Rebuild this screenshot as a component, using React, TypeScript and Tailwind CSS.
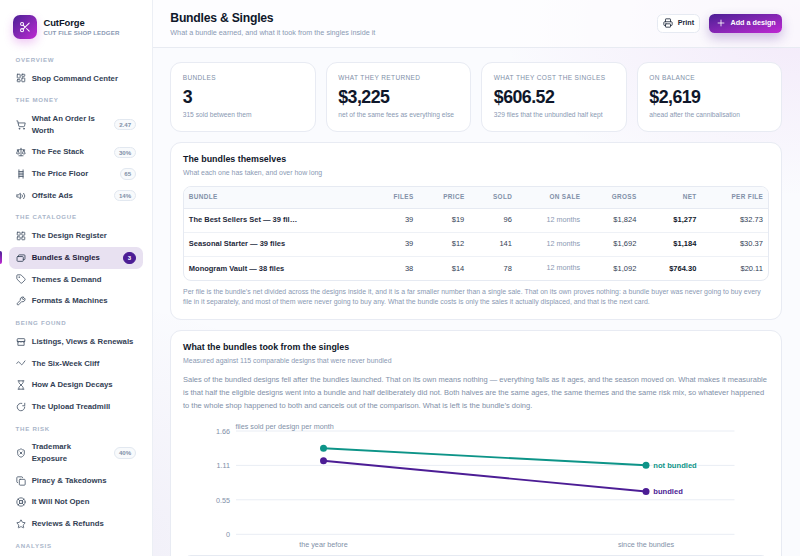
import type { ReactNode } from "react";
import {
  Copy,
  Hourglass,
  LayoutDashboard,
  LayoutGrid,
  LifeBuoy,
  Plus,
  Printer,
  Scale,
  Scissors,
  ShieldX,
  ShoppingCart,
  Star,
  Tag,
} from "lucide-react";

const iconClass = "w-[10px] h-[10px] shrink-0";

function Glyph({ children }: { children: ReactNode }) {
  return (
    <svg
      viewBox="0 0 24 24"
      fill="none"
      stroke="currentColor"
      strokeWidth={2}
      strokeLinecap="round"
      strokeLinejoin="round"
      className={iconClass}
    >
      {children}
    </svg>
  );
}

type Item = { label: string; icon: ReactNode; badge?: string; active?: boolean };

const groups: { title: string; items: Item[] }[] = [
  {
    title: "OVERVIEW",
    items: [{ label: "Shop Command Center", icon: <LayoutDashboard className={iconClass} /> }],
  },
  {
    title: "THE MONEY",
    items: [
      { label: "What An Order Is Worth", icon: <ShoppingCart className={iconClass} />, badge: "2.47" },
      { label: "The Fee Stack", icon: <Scale className={iconClass} />, badge: "30%" },
      {
        label: "The Price Floor",
        icon: (
          <Glyph>
            <path d="M7 2v20M17 2v20M7 6h10M7 10h10M7 14h10M7 18h10" />
          </Glyph>
        ),
        badge: "65",
      },
      {
        label: "Offsite Ads",
        icon: (
          <Glyph>
            <path d="M2 9.500v5h3.500l5 4v-13l-5 4zM14.500 9a4 4 0 0 1 0 6M18.500 5.500a9.500 9.500 0 0 1 0 13" />
          </Glyph>
        ),
        badge: "14%",
      },
    ],
  },
  {
    title: "THE CATALOGUE",
    items: [
      { label: "The Design Register", icon: <LayoutGrid className={iconClass} /> },
      {
        label: "Bundles & Singles",
        icon: (
          <Glyph>
            <rect x="2.500" y="8.500" width="15" height="11.500" rx="2" />
            <path d="M6 8.500V6.500a2 2 0 0 1 2-2h11.500a2 2 0 0 1 2 2V14a2 2 0 0 1-2 2h-2" />
          </Glyph>
        ),
        badge: "3",
        active: true,
      },
      { label: "Themes & Demand", icon: <Tag className={iconClass} /> },
      {
        label: "Formats & Machines",
        icon: (
          <Glyph>
            <path d="M18.500 2.800a6 6 0 0 0-8 7.700L3 17.500A2.500 2.500 0 0 0 6.500 21l7-7.500a6 6 0 0 0 7.700-8L17.500 9 15 6.500z" />
          </Glyph>
        ),
      },
    ],
  },
  {
    title: "BEING FOUND",
    items: [
      {
        label: "Listings, Views & Renewals",
        icon: (
          <Glyph>
            <path d="M3 10V5.500A1.500 1.500 0 0 1 4.500 4h15A1.500 1.500 0 0 1 21 5.500V10zM4.500 10v10h15V10M3 10c1 3 5 3 6 0 1 3 5 3 6 0 1 3 5 3 6 0" />
          </Glyph>
        ),
      },
      {
        label: "The Six-Week Cliff",
        icon: (
          <Glyph>
            <path d="M2 13c2.500-5 5-5 7.500-1s5 6 7.500 1l4.500-6" />
          </Glyph>
        ),
      },
      { label: "How A Design Decays", icon: <Hourglass className={iconClass} /> },
      {
        label: "The Upload Treadmill",
        icon: (
          <Glyph>
            <path d="M14 3.200A9 9 0 1 0 21 12M21 3v6h-5" />
          </Glyph>
        ),
      },
    ],
  },
  {
    title: "THE RISK",
    items: [
      { label: "Trademark Exposure", icon: <ShieldX className={iconClass} />, badge: "40%" },
      { label: "Piracy & Takedowns", icon: <Copy className={iconClass} /> },
      { label: "It Will Not Open", icon: <LifeBuoy className={iconClass} /> },
      { label: "Reviews & Refunds", icon: <Star className={iconClass} /> },
    ],
  },
  { title: "ANALYSIS", items: [] },
];

const stats = [
  { label: "BUNDLES", value: "3", note: "315 sold between them" },
  { label: "WHAT THEY RETURNED", value: "$3,225", note: "net of the same fees as everything else" },
  { label: "WHAT THEY COST THE SINGLES", value: "$606.52", note: "329 files that the unbundled half kept" },
  { label: "ON BALANCE", value: "$2,619", note: "ahead after the cannibalisation" },
];

const columns = ["FILES", "PRICE", "SOLD", "ON SALE", "GROSS", "NET", "PER FILE"];

const rows = [
  ["The Best Sellers Set — 39 fil…", "39", "$19", "96", "12 months", "$1,824", "$1,277", "$32.73"],
  ["Seasonal Starter — 39 files", "39", "$12", "141", "12 months", "$1,692", "$1,184", "$30.37"],
  ["Monogram Vault — 38 files", "38", "$14", "78", "12 months", "$1,092", "$764.30", "$20.11"],
];

function NavItem({ item }: { item: Item }) {
  return (
    <div
      className={`relative flex items-center gap-[6.1px] rounded-[6.5px] px-[6.7px] py-[5px] ${
        item.active ? "bg-[#e8e1f1] text-[#1e1b3a]" : "text-[#334155]"
      }`}
    >
      {item.active && (
        <span className="absolute -left-[9px] top-[4.4px] h-[13px] w-[2.2px] rounded-r-[2px] bg-linear-to-b from-[#4c1d95] to-[#c026d3]" />
      )}
      <span className={item.active ? "text-[#334155]" : "text-[#475569]"}>{item.icon}</span>
      <span className="min-w-0 flex-1 text-[7.78px] font-bold leading-[11.67px]">{item.label}</span>
      {item.badge && (
        <span
          className={`rounded-full border px-[3.8px] text-[6.11px] font-bold leading-[9.4px] ${
            item.active
              ? "border-[#4c1d95] bg-[#4c1d95] text-white"
              : "border-[#e2e8f0] bg-[#f8fafc] text-[#8190a8]"
          }`}
        >
          {item.badge}
        </span>
      )}
    </div>
  );
}

function Sidebar() {
  return (
    <aside className="flex h-full w-[152.5px] shrink-0 flex-col overflow-hidden border-r border-[#eceff5] bg-white px-[8.9px] pt-[14.8px]">
      <div className="flex h-[24.5px] shrink-0 items-center gap-[6.2px] pl-[4.4px]">
        <div className="flex h-[24px] w-[24px] items-center justify-center rounded-[7px] bg-linear-to-br from-[#4c1d95] to-[#c026d3] text-white shadow-[0_4px_10px_rgba(192,38,211,0.25)]">
          <Scissors className="h-[12.2px] w-[12.2px]" />
        </div>
        <div>
          <div className="text-[9.44px] font-bold leading-[11px] tracking-[-0.01em] text-[#0f172a]">CutForge</div>
          <div className="whitespace-nowrap text-[6.11px] font-bold leading-[9px] tracking-[0.02em] text-[#8a99b3]">
            CUT FILE SHOP LEDGER
          </div>
        </div>
      </div>
      <nav className="pt-[9.4px]">
        {groups.map((g) => (
          <div key={g.title}>
            <div className="h-[18.87px] pl-[6.7px] pt-[6px] text-[6.11px] font-bold leading-[9.2px] tracking-[0.12em] text-[#a9b5c9]">
              {g.title}
            </div>
            {g.items.map((item) => (
              <NavItem key={item.label} item={item} />
            ))}
          </div>
        ))}
      </nav>
    </aside>
  );
}

function Header() {
  return (
    <header className="flex h-[47.5px] shrink-0 items-center justify-between border-b border-[#e8ebf2] bg-white/60 px-[17.8px]">
      <div>
        <h1 className="pt-[1.5px] text-[12.22px] font-bold leading-[15px] tracking-[-0.02em] text-[#0f172a]">
          Bundles &amp; Singles
        </h1>
        <p className="mt-[1px] text-[7.22px] leading-[11px] text-[#8a99b3]">
          What a bundle earned, and what it took from the singles inside it
        </p>
      </div>
      <div className="flex items-center gap-[8.8px]">
        <button className="flex h-[18.5px] w-[43.5px] items-center justify-center gap-[4.4px] rounded-[5.5px] border border-[#e6eaf2] bg-white text-[7.22px] font-bold text-[#1e293b]">
          <Printer className="h-[10px] w-[10px]" />
          Print
        </button>
        <button className="flex h-[18.5px] w-[73px] items-center justify-center gap-[4.8px] rounded-[5.5px] bg-linear-to-br from-[#4c1d95] to-[#c026d3] text-[7.22px] font-bold text-white shadow-[0_5px_12px_rgba(76,29,149,0.28)]">
          <Plus className="h-[10px] w-[10px]" />
          Add a design
        </button>
      </div>
    </header>
  );
}

function StatCard({ label, value, note }: { label: string; value: string; note: string }) {
  return (
    <div className="h-[69.3px] rounded-[11px] border border-[#e8ebf3] bg-white pl-[11.7px] pt-[10px]">
      <div className="whitespace-nowrap text-[6.5px] leading-[10px] tracking-[0.058em] text-[#8190a8]">{label}</div>
      <div className="mt-[4px] text-[17.78px] font-bold leading-[20px] tracking-[-0.03em] text-[#0f172a]">{value}</div>
      <div className="mt-[3px] whitespace-nowrap text-[6.67px] leading-[10px] text-[#8a99b3]">{note}</div>
    </div>
  );
}

function BundleTable() {
  return (
    <div className="mt-[7.6px] overflow-hidden rounded-[8px] border border-[#e6eaf2]">
      <table className="w-full table-fixed text-right text-[7.5px] text-[#334155]">
        <colgroup>
          <col />
          <col className="w-[50px]" />
          <col className="w-[51px]" />
          <col className="w-[47.7px]" />
          <col className="w-[68.2px]" />
          <col className="w-[56.2px]" />
          <col className="w-[60px]" />
          <col className="w-[66.6px]" />
        </colgroup>
        <thead>
          <tr className="h-[21.5px] border-b border-[#e6eaf2] bg-[#f8fafd] text-[6.39px] tracking-[0.06em] text-[#8190a8]">
            <th className="pb-[1.5px] pl-[4.8px] text-left font-bold">BUNDLE</th>
            {columns.map((c) => (
              <th key={c} className="pb-[1.5px] pr-[5px] font-bold">
                {c}
              </th>
            ))}
          </tr>
        </thead>
        <tbody>
          {rows.map((row) => (
            <tr key={row[0]} className="h-[23.9px] border-b border-[#eef1f6] last:border-b-0 *:pb-[1px]">
              <td className="whitespace-nowrap pl-[4.8px] text-left font-bold text-[#1e293b]">{row[0]}</td>
              <td className="pr-[5.3px]">{row[1]}</td>
              <td className="pr-[5.3px]">{row[2]}</td>
              <td className="pr-[5.3px]">{row[3]}</td>
              <td className="pr-[5.3px] text-[#8a99b3]">
                <span className="text-[7.22px]">{row[4]}</span>
              </td>
              <td className="pr-[5.3px]">{row[5]}</td>
              <td className="pr-[5.3px] font-bold text-[#0f172a]">{row[6]}</td>
              <td className="pr-[5.3px]">{row[7]}</td>
            </tr>
          ))}
        </tbody>
      </table>
    </div>
  );
}

const ticks = [
  { y: 11, label: "1.66" },
  { y: 45.4, label: "1.11" },
  { y: 79.8, label: "0.55" },
  { y: 114.3, label: "0" },
];

function SlopeChart() {
  return (
    <svg viewBox="0 0 586 132" className="mt-[7.5px] block h-[132px] w-[586px]" fontSize="7.22" fill="#8190a8">
      {ticks.map((t) => (
        <g key={t.label}>
          <line x1="53" x2="551.5" y1={t.y} y2={t.y} stroke="#e9edf4" />
          <text x="47" y={t.y + 2.7} textAnchor="end">
            {t.label}
          </text>
        </g>
      ))}
      <text x="52.5" y="9">files sold per design per month</text>
      <text x="140.5" y="127" textAnchor="middle">the year before</text>
      <text x="463" y="127" textAnchor="middle">since the bundles</text>
      <g stroke="#0d9488" fill="#0d9488">
        <line x1="140.5" y1="28.3" x2="463" y2="45.3" strokeWidth="1.9" />
        <circle cx="140.5" cy="28.3" r="3.5" stroke="none" />
        <circle cx="463" cy="45.3" r="3.5" stroke="none" />
      </g>
      <g stroke="#4c1d95" fill="#4c1d95">
        <line x1="140.5" y1="40.8" x2="463" y2="71.5" strokeWidth="1.9" />
        <circle cx="140.5" cy="40.8" r="3.5" stroke="none" />
        <circle cx="463" cy="71.5" r="3.5" stroke="none" />
      </g>
      <g fontWeight="700" fontSize="7.6" stroke="#fff" strokeWidth="2" paintOrder="stroke">
        <text x="470.3" y="48" fill="#0d9488">not bundled</text>
        <text x="470.3" y="74.2" fill="#4c1d95">bundled</text>
      </g>
    </svg>
  );
}

export default function App() {
  return (
    <div className="flex h-[556px] w-[800px] overflow-hidden bg-[#fafbfe] bg-[radial-gradient(300px_170px_at_100%_5%,rgba(160,38,200,0.08),transparent),radial-gradient(330px_260px_at_10%_100%,rgba(76,29,149,0.06),transparent)] font-['Liberation_Sans',Arial,sans-serif]">
      <Sidebar />
      <div className="flex min-w-0 flex-1 flex-col">
        <Header />
        <main className="flex min-h-0 flex-1 flex-col gap-[10.3px] overflow-hidden pl-[17.5px] pr-[17.8px] pt-[14.8px]">
          <div className="grid shrink-0 grid-cols-4 gap-[10px]">
            {stats.map((s) => (
              <StatCard key={s.label} {...s} />
            ))}
          </div>
          <section className="h-[177.8px] shrink-0 rounded-[11px] border border-[#e8ebf3] bg-white px-[12px] pt-[10.5px]">
            <h2 className="text-[8.89px] font-bold leading-[13px] text-[#0f172a]">The bundles themselves</h2>
            <p className="mt-[1.7px] text-[6.94px] leading-[10.5px] text-[#8a99b3]">
              What each one has taken, and over how long
            </p>
            <BundleTable />
            <p className="mt-[5.4px] text-[6.94px] leading-[10.6px] text-[#8a99b3]">
              Per file is the bundle’s net divided across the designs inside it, and it is a far smaller number than a
              single sale. That on its own proves nothing: a bundle buyer was never going to buy every file in it
              separately, and most of them were never going to buy any. What the bundle costs is only the sales it
              actually displaced, and that is the next card.
            </p>
          </section>
          <section className="h-[300px] shrink-0 rounded-t-[11px] border border-[#e8ebf3] bg-white px-[12px] pt-[10.5px]">
            <h2 className="text-[8.89px] font-bold leading-[13px] text-[#0f172a]">
              What the bundles took from the singles
            </h2>
            <p className="mt-[1.7px] text-[6.94px] leading-[10.5px] text-[#8a99b3]">
              Measured against 115 comparable designs that were never bundled
            </p>
            <p className="mt-[7.8px] text-[7.5px] leading-[12.6px] text-[#8190a8]">
              Sales of the bundled designs fell after the bundles launched. That on its own means nothing — everything
              falls as it ages, and the season moved on. What makes it measurable is that half the eligible designs went
              into a bundle and half deliberately did not. Both halves are the same ages, the same themes and the same
              risk mix, so whatever happened to the whole shop happened to both and cancels out of the comparison. What
              is left is the bundle’s doing.
            </p>
            <SlopeChart />
            <div className="mt-[3.3px] h-[80px] rounded-[8px] border border-[#e6eaf2]" />
          </section>
        </main>
      </div>
    </div>
  );
}
